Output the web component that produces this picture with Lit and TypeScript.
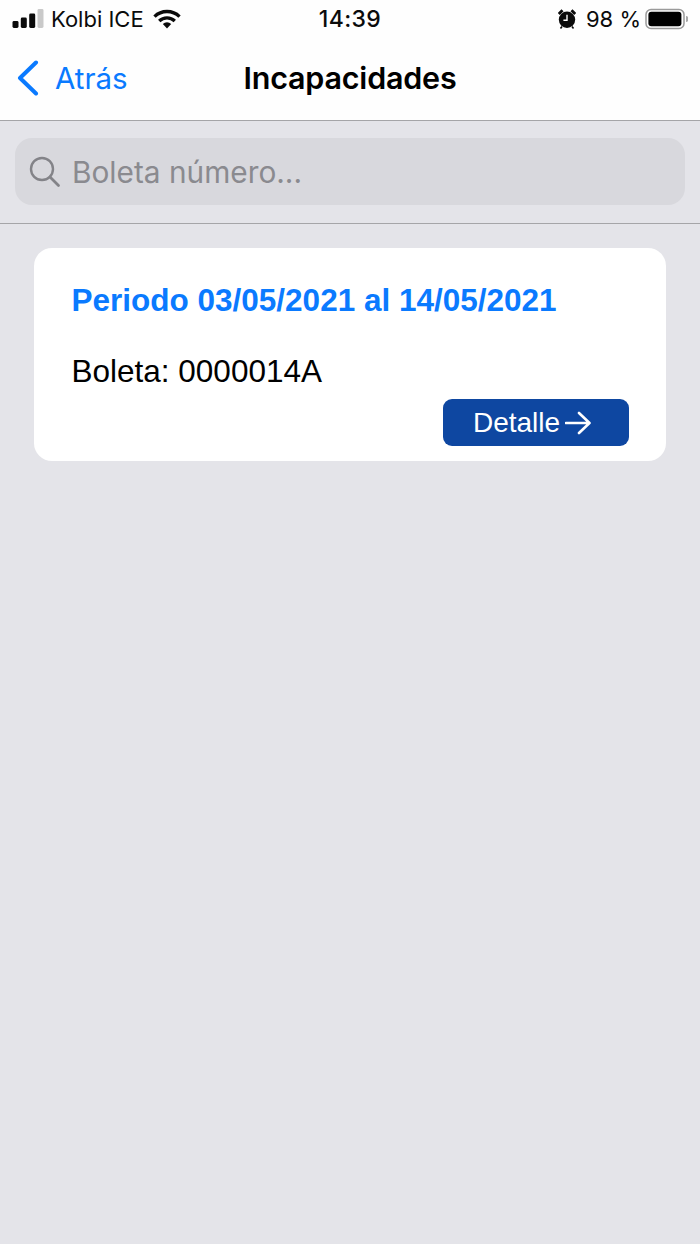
import { LitElement, html, css } from 'lit';
import { customElement } from 'lit/decorators.js';

@customElement('app-root')
export class AppRoot extends LitElement {
  static styles = css`
    :host {
      display: block;
      width: 700px;
      height: 1244px;
      background: #e4e4e9;
      font-family: "Liberation Sans", Arial, sans-serif;
      overflow: hidden;
    }
    .top {
      background: #fefefe;
      height: 120px;
      border-bottom: 1px solid #a5a5a8;
      font-family: Inter, "Liberation Sans", sans-serif;
    }
    .status {
      height: 38px;
      display: grid;
      grid-template-columns: 1fr auto 1fr;
      align-items: center;
      padding: 0 12px;
      color: #0b0b0b;
    }
    .status-left, .status-right {
      display: flex;
      align-items: center;
    }
    .status-right { justify-content: flex-end; }
    .carrier { margin: 0 9px 0 7px; font-size: 22px; white-space: nowrap; }
    .clock { font-size: 23px; font-weight: 500; letter-spacing: 0.4px; }
    .battery-text { margin: 0 4px 0 10px; font-size: 22px; }
    .nav {
      height: 82px;
      display: grid;
      grid-template-columns: 1fr auto 1fr;
      align-items: center;
      padding: 0 16px 3px;
      box-sizing: border-box;
    }
    .back {
      display: flex;
      align-items: center;
      gap: 16px;
      color: #0a7aff;
      font-size: 29.5px;
    }
    .title {
      font-size: 30.5px;
      font-weight: 600;
      color: #000;
      letter-spacing: -0.2px;
    }
    .search-bar {
      padding: 17px 15px 0;
      height: 103px;
      box-sizing: border-box;
      border-bottom: 1px solid #a5a5a8;
    }
    .search {
      height: 67px;
      border-radius: 17px;
      background: #d8d8dd;
      display: flex;
      align-items: center;
      padding-left: 14px;
      gap: 11px;
      color: #8a8a8f;
      font-family: Inter, "Liberation Sans", sans-serif;
      font-size: 29.8px;
    }
    .card {
      margin: 24px 34px 0;
      background: #fff;
      border-radius: 18px;
      height: 213px;
      box-sizing: border-box;
      padding: 34px 37px 15px 37.5px;
      display: flex;
      flex-direction: column;
    }
    .period {
      color: #0a7aff;
      font-size: 31.5px;
      font-weight: 700;
      line-height: 36px;
    }
    .number {
      margin-top: 35px;
      font-size: 31.5px;
      line-height: 36px;
      color: #000;
    }
    .detail {
      margin-top: auto;
      align-self: flex-end;
      width: 186px;
      height: 47px;
      box-sizing: border-box;
      padding-right: 8px;
      border-radius: 9px;
      background: #0e47a1;
      color: #fff;
      display: flex;
      align-items: center;
      justify-content: center;
      gap: 5px;
      font-size: 28px;
    }
    svg { display: block; flex: none; }
  `;

  render() {
    return html`
      <div class="top">
        <div class="status">
          <div class="status-left">
            <svg width="32" height="20" viewBox="0 0 32 20">
              <rect x="0.5" y="12" width="6" height="7" rx="1.4" fill="#0b0b0b" />
              <rect x="8.8" y="8.5" width="6" height="10.5" rx="1.4" fill="#0b0b0b" />
              <rect x="17.2" y="4.5" width="6" height="14.5" rx="1.4" fill="#0b0b0b" />
              <rect x="25.5" y="0" width="6" height="19" rx="1.4" fill="#c9c9c9" />
            </svg>
            <span class="carrier">Kolbi ICE</span>
            <svg width="28" height="20" viewBox="0 0 28 20">
              <g fill="none" stroke="#0b0b0b" stroke-width="3.4">
                <path d="M1.5 7.6 A18 18 0 0 1 26.5 7.6" />
                <path d="M6.2 12 A11.4 11.4 0 0 1 21.8 12" />
              </g>
              <path d="M9.8 15 A6.2 6.2 0 0 1 18.2 15 L14 19.5 Z" fill="#0b0b0b" />
            </svg>
          </div>
          <span class="clock">14:39</span>
          <div class="status-right">
            <svg width="18" height="20" viewBox="0 0 18 20">
              <circle cx="9" cy="10.8" r="8.2" fill="#0b0b0b" />
              <path d="M9 5.8v5.4h-3.6" fill="none" stroke="#fff" stroke-width="1.4" />
              <path d="M0.8 5 L4.5 1.2 M17.2 5 L13.5 1.2" stroke="#0b0b0b" stroke-width="2.8" />
              <path d="M4 17.5 L2.5 19.4 M14 17.5 L15.5 19.4" stroke="#0b0b0b" stroke-width="1.6" />
            </svg>
            <span class="battery-text">98 %</span>
            <svg width="43" height="22" viewBox="0 0 43 22">
              <rect x="1" y="1.5" width="38" height="19" rx="5" fill="none" stroke="#9a9a9a" stroke-width="1.5" />
              <rect x="3.4" y="3.8" width="33" height="14.4" rx="3" fill="#000" />
              <path d="M41 8 a2.4 3 0 0 1 0 6 Z" fill="#a8a8a8" />
            </svg>
          </div>
        </div>
        <div class="nav">
          <div class="back">
            <svg width="23" height="36" viewBox="0 0 23 36">
              <path d="M20 2.5 L4 18 L20 33.5" fill="none" stroke="#0a7aff" stroke-width="4" stroke-linecap="round" stroke-linejoin="round" />
            </svg>
            <span>Atrás</span>
          </div>
          <span class="title">Incapacidades</span>
          <span></span>
        </div>
      </div>
      <div class="search-bar">
        <div class="search">
          <svg width="32" height="32" viewBox="0 0 32 32">
            <circle cx="13" cy="13" r="11" fill="none" stroke="#838388" stroke-width="2.4" />
            <path d="M21 21 L29.5 29.5" stroke="#838388" stroke-width="2.8" stroke-linecap="round" />
          </svg>
          <span>Boleta número...</span>
        </div>
      </div>
      <div class="card">
        <div class="period">Periodo 03/05/2021 al 14/05/2021</div>
        <div class="number">Boleta: 0000014A</div>
        <div class="detail">
          <span>Detalle</span>
          <svg width="26" height="24" viewBox="0 0 26 24">
            <path d="M1 12 H24 M14 2 L24.5 12 L14 22" fill="none" stroke="#fff" stroke-width="2.6" stroke-linecap="round" stroke-linejoin="round" />
          </svg>
        </div>
      </div>
    `;
  }
}
